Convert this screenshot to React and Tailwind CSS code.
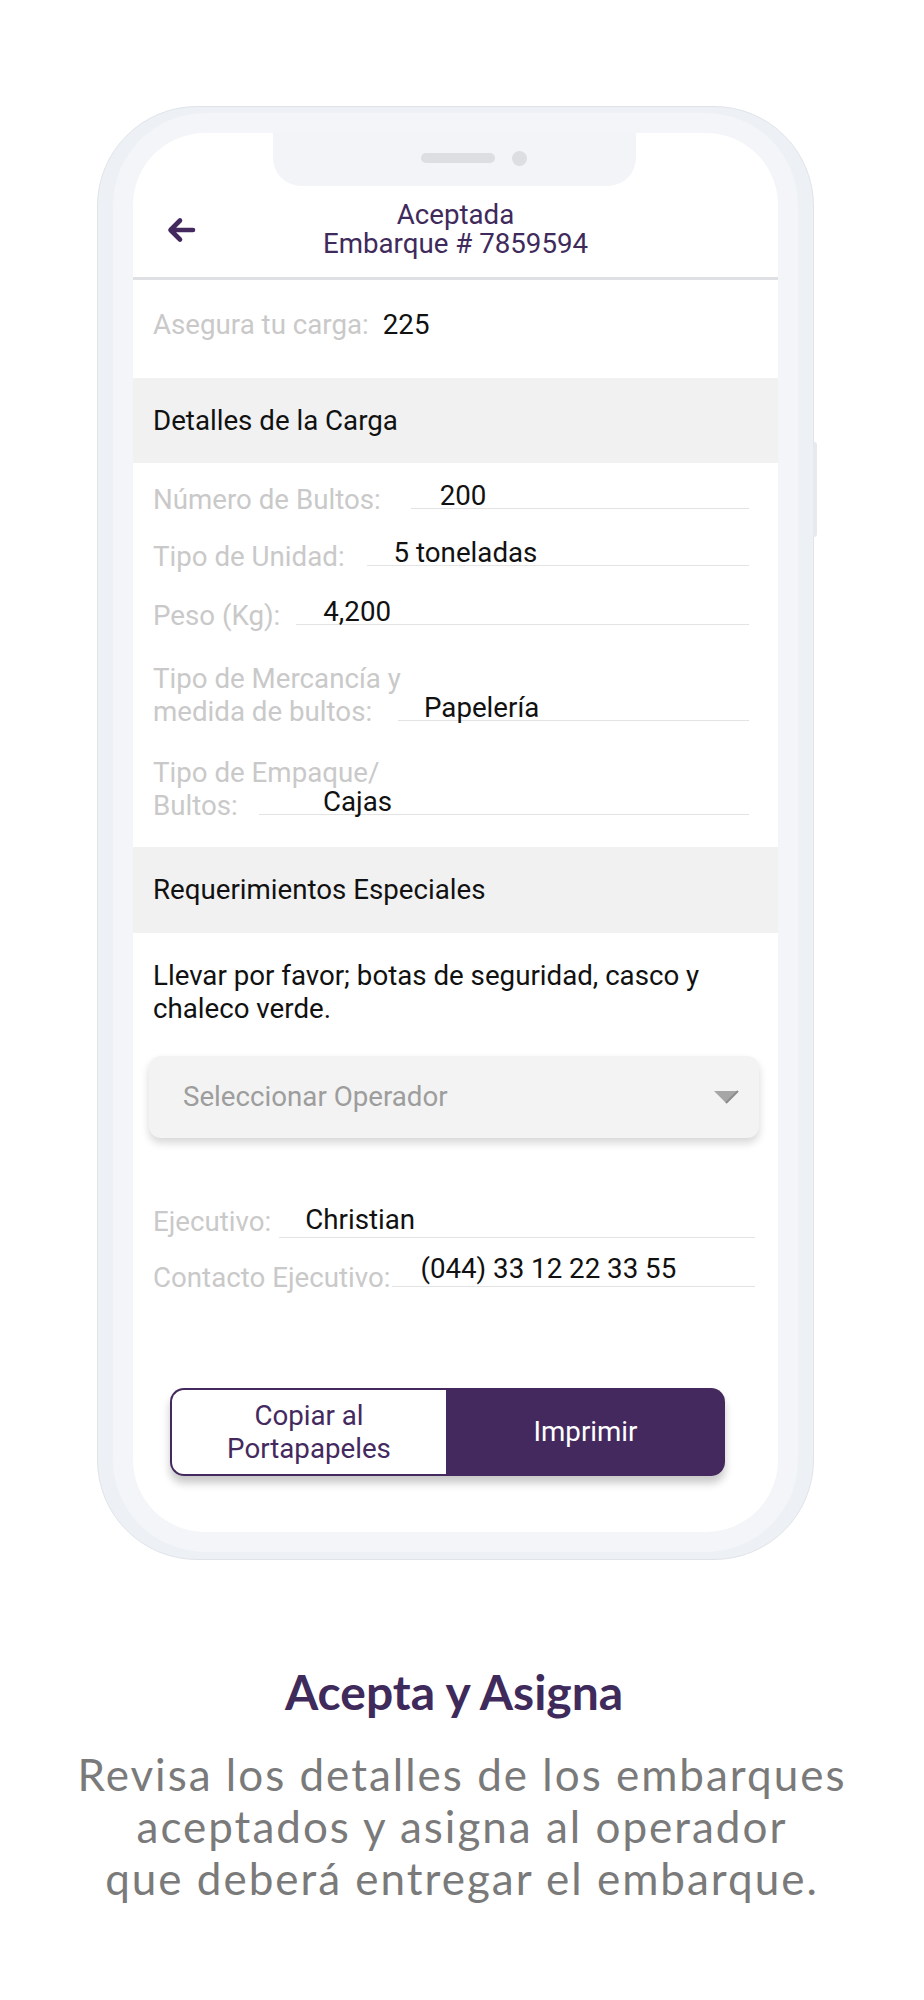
import React from 'react';

const PURPLE = '#44295f';

function Field({ label, value, gap, pad, labelMb = '-mb-[7px]', labelW = '', valuePb = '', extra = '' }) {
  return (
    <div className={`flex items-end ${extra}`}>
      <span className={`shrink-0 whitespace-nowrap leading-[33px] text-[#c9c9c9] ${labelMb} ${labelW}`}>{label}</span>
      <div className={`flex-1 border-b border-[#e3e3e3] leading-[25px] text-[#111] ${gap} ${pad} ${valuePb}`}>
        {value}
      </div>
    </div>
  );
}

function BackArrow() {
  return (
    <svg width="30" height="28" viewBox="0 0 30 28" fill="none">
      <path
        d="M27 14H5M14 4.5L4.5 14L14 23.5"
        stroke={PURPLE}
        strokeWidth="4.6"
        strokeLinecap="round"
        strokeLinejoin="round"
      />
    </svg>
  );
}

function Caret() {
  return (
    <svg width="26" height="14" viewBox="0 0 26 14">
      <polygon points="1,1 25,1 13,13" fill="#a6a6a6" />
      <path d="M25 1L13 13" stroke="#8c8c8c" strokeWidth="2" />
    </svg>
  );
}

export default function App() {
  return (
    <div className="w-[924px] h-[2000px] bg-white flex flex-col items-center font-['Roboto',sans-serif]">
      {/* phone frame */}
      <div className="relative self-start ml-[97px] mt-[106px] w-[717px] h-[1454px] rounded-[100px] bg-[#edf0f4] border border-[#e0e4e9] px-[35px] pt-[26px] pb-[27px]">
        <div className="absolute right-[-4px] top-[335px] w-[4px] h-[95px] rounded-r-[3px] bg-[#e6e9ed]" />

        <div className="relative w-[645px] h-full rounded-[72px] bg-white ring-[20px] ring-[#f3f5f8] overflow-hidden text-[27.7px]">
          {/* notch */}
          <div className="absolute top-0 left-[140px] w-[363px] h-[53px] rounded-b-[28px] bg-[#f2f4f7] flex items-start pt-[20px] pl-[148px] gap-[17px]">
            <div className="w-[74px] h-[10px] rounded-full bg-[#dcdee2]" />
            <div className="-mt-[2px] w-[15px] h-[15px] rounded-full bg-[#dcdee2]" />
          </div>

          {/* header */}
          <div className="relative pt-[67px] pb-[19px] text-center leading-[29px] text-[#3f2a5c]">
            <div className="absolute left-[33px] top-[83px]">
              <BackArrow />
            </div>
            <div>Aceptada</div>
            <div>Embarque # 7859594</div>
          </div>
          <div className="h-[3px] bg-[#dfe0e3]" />

          <div className="h-[98px] pt-[28px] px-[20px] leading-[33px]">
            <span className="text-[#c9c9c9]">Asegura tu carga:</span>
            <span className="ml-[14px] text-[#111]">225</span>
          </div>

          <div className="h-[85px] bg-[#f1f1f1] flex items-center px-[20px] text-[#111]">Detalles de la Carga</div>

          <div className="flex flex-col gap-[33px] pt-[20px] pb-[32px] pl-[20px] pr-[29px]">
            <Field label="Número de Bultos:" value="200" gap="ml-[30px]" pad="pl-[29px]" />
            <Field label="Tipo de Unidad:" value="5 toneladas" gap="ml-[22px]" pad="pl-[27px]" extra="-mt-[2px]" />
            <Field label="Peso (Kg):" value="4,200" gap="ml-[16px]" pad="pl-[27px]" />
            <Field
              label={<>Tipo de Mercancía y<br />medida de bultos:</>}
              value="Papelería"
              labelW="w-[221px]"
              gap="ml-[24px]"
              pad="pl-[26px]"
              extra="mt-[4px]"
            />
            <Field
              label={<>Tipo de Empaque/<br />Bultos:</>}
              value="Cajas"
              labelW="w-[86px]"
              gap="ml-[20px]"
              pad="pl-[64px]"
              extra="mt-[2px]"
            />
          </div>

          <div className="h-[86px] bg-[#f1f1f1] flex items-center px-[20px] text-[#111]">Requerimientos Especiales</div>

          <p className="mt-[26px] px-[20px] leading-[33px] text-[#111]">
            Llevar por favor; botas de seguridad, casco y<br />chaleco verde.
          </p>

          {/* operator select */}
          <div className="mt-[31px] ml-[16px] mr-[19px] h-[82px] rounded-[12px] bg-[#f3f3f3] shadow-[0_5px_9px_rgba(0,0,0,0.16)] flex items-center justify-between pl-[34px] pr-[20px]">
            <span className="text-[#9d9d9d]">Seleccionar Operador</span>
            <Caret />
          </div>

          <div className="flex flex-col gap-[18px] mt-[67px] pl-[20px] pr-[23px]">
            <Field label="Ejecutivo:" value="Christian" gap="ml-[8px]" pad="pl-[26px]" labelMb="mb-0" valuePb="pb-[5px]" />
            <Field label="Contacto Ejecutivo:" value="(044) 33 12 22 33 55" gap="ml-[2px]" pad="pl-[28px]" valuePb="pb-[5px]" />
          </div>

          {/* actions */}
          <div className="mt-[101px] ml-[37px] w-[555px] h-[88px] flex rounded-[14px] shadow-[0_7px_9px_rgba(0,0,0,0.22)]">
            <button className="w-[276px] h-full rounded-l-[14px] border-2 border-r-0 border-[#44295f] bg-white text-[#44295f] leading-[33px]">
              Copiar al<br />Portapapeles
            </button>
            <button className="flex-1 h-full rounded-r-[14px] bg-[#44295f] text-white">Imprimir</button>
          </div>
        </div>
      </div>

      <h2 className="mt-[104px] mr-[16px] text-[48px] leading-[56px] font-bold text-[#3f2a5c] font-['Lato',sans-serif]">
        Acepta y Asigna
      </h2>
      <p className="mt-[28px] text-center text-[44px] leading-[52px] tracking-[2px] text-[#7a7a7a] font-['Lato',sans-serif]">
        Revisa los detalles de los embarques<br />
        aceptados y asigna al operador<br />
        que deberá entregar el embarque.
      </p>
    </div>
  );
}
